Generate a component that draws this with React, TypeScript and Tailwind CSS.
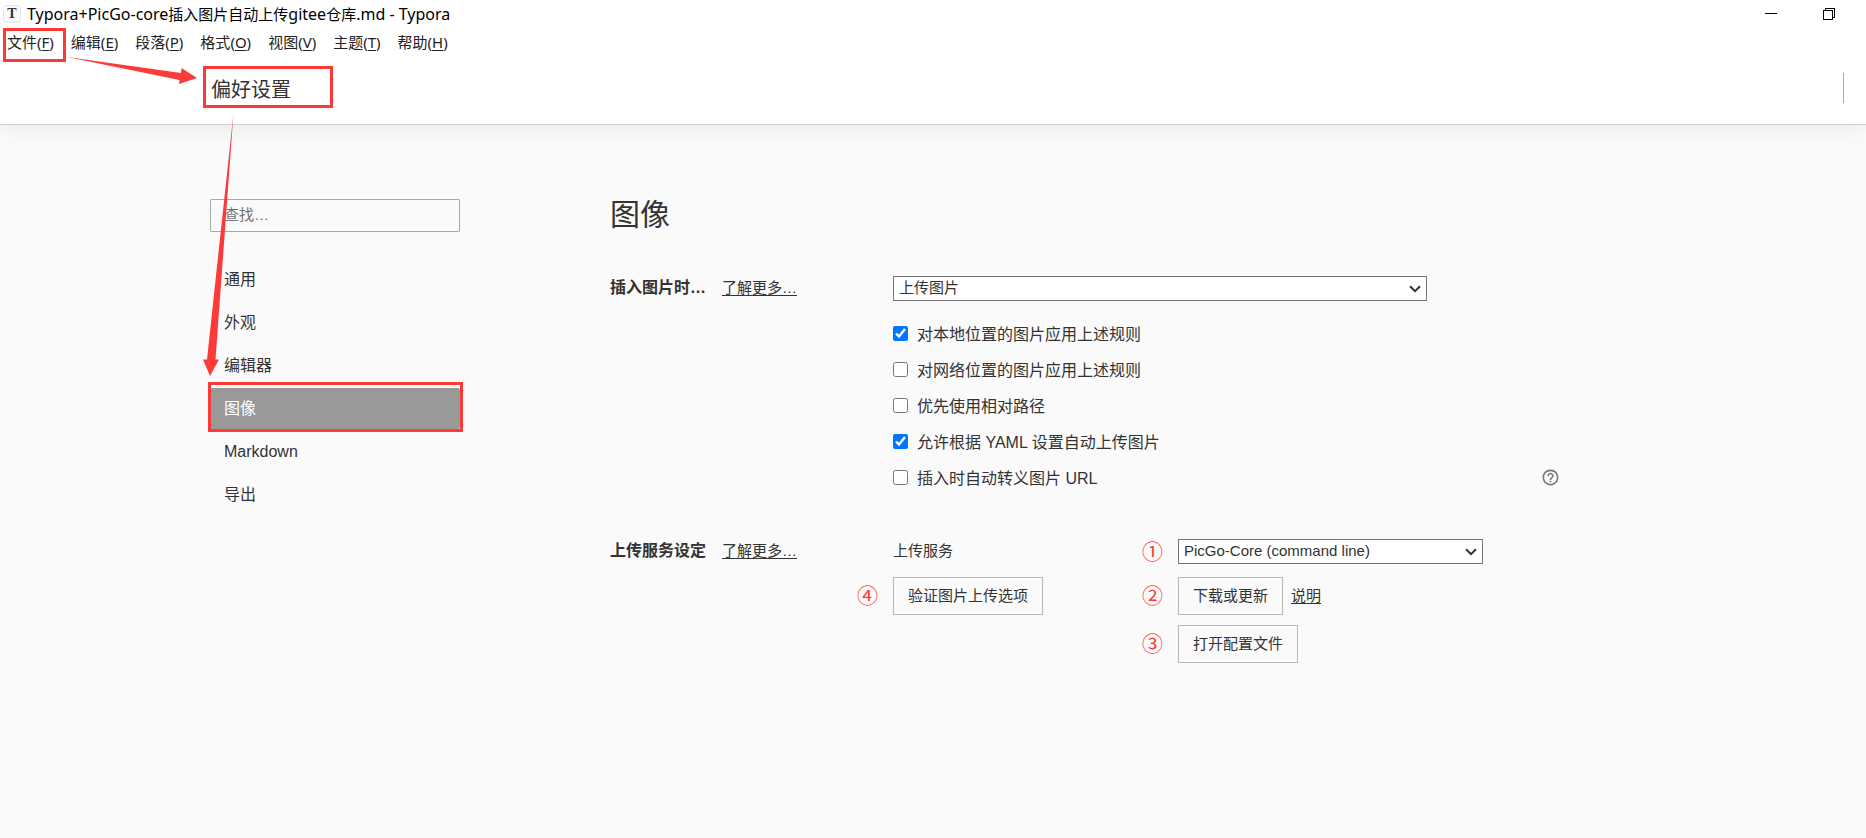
import { useState } from 'react';
import type { ReactNode } from 'react';
import { MdHelpOutline } from 'react-icons/md';

const menuItems = [
  { label: '文件', key: 'F' },
  { label: '编辑', key: 'E' },
  { label: '段落', key: 'P' },
  { label: '格式', key: 'O' },
  { label: '视图', key: 'V' },
  { label: '主题', key: 'T' },
  { label: '帮助', key: 'H' },
];

const navItems = ['通用', '外观', '编辑器', '图像', 'Markdown', '导出'];

const imageRules = [
  { id: 'local', label: '对本地位置的图片应用上述规则', checked: true },
  { id: 'remote', label: '对网络位置的图片应用上述规则', checked: false },
  { id: 'relative', label: '优先使用相对路径', checked: false },
  { id: 'yaml', label: '允许根据 YAML 设置自动上传图片', checked: true },
  { id: 'escape', label: '插入时自动转义图片 URL', checked: false, help: true },
];

function TitleBar() {
  return (
    <div className="flex h-7 items-center pl-[3px] font-['Noto_Sans','Noto_Sans_CJK_SC',sans-serif] text-black">
      <span className="flex h-[18px] w-[18px] items-center justify-center rounded border border-[#e4e4e4] bg-[#fafafa] font-['Liberation_Serif',serif] text-sm leading-none font-bold text-[#333]">
        T
      </span>
      <h1 className="ml-1.5 text-base leading-5 whitespace-nowrap">
        Typora+PicGo-core<span className="text-[15px]">插入图片自动上传</span>gitee<span className="text-[15px]">仓库</span>.md - Typora
      </h1>
      <div className="ml-auto flex items-center gap-[46px] pr-[31px]">
        <button aria-label="最小化">
          <svg width="12" height="12" className="block" shapeRendering="crispEdges">
            <path d="M0 5.5h12" stroke="#000" />
          </svg>
        </button>
        <button aria-label="还原">
          <svg width="12" height="12" className="block" fill="none" stroke="#000" shapeRendering="crispEdges">
            <path d="M.5 2.5h9v9h-9z" />
            <path d="M2.5 2.5v-2h9v9h-2" />
          </svg>
        </button>
      </div>
    </div>
  );
}

function MenuBar() {
  return (
    <nav className="flex h-7 items-center gap-[17px] pl-[7px] font-['Noto_Sans','Noto_Sans_CJK_SC',sans-serif] text-[15px] leading-5 text-[#222]">
      {menuItems.map((item, i) => (
        <button key={item.key} className="relative whitespace-nowrap">
          {item.label}(<span className="underline underline-offset-2">{item.key}</span>)
          {i === 0 && <span className="absolute -top-1 -right-3 -bottom-2.5 -left-1 border-[3px] border-[#fc3a37]" />}
        </button>
      ))}
    </nav>
  );
}

function Sidebar() {
  const [active, setActive] = useState('图像');

  return (
    <aside className="w-[250px] shrink-0">
      <input
        type="search"
        aria-label="查找"
        placeholder="查找…"
        className="block h-[33px] w-full rounded-[1px] border border-[#a9a9a9] px-[13px] pb-0.5 text-[15px] placeholder:text-[#757575]"
      />
      <ul className="mt-[27px]">
        {navItems.map((item) => (
          <li key={item} className="relative h-[43px]">
            <button
              onClick={() => setActive(item)}
              className={`h-[41px] w-full rounded-xs px-3.5 text-left ${active === item ? 'bg-[#999] text-white' : ''}`}
            >
              {item}
            </button>
            {item === '图像' && (
              <span className="pointer-events-none absolute -top-1.5 -right-[3px] -bottom-px -left-0.5 border-[3px] border-[#fc3a37]" />
            )}
          </li>
        ))}
      </ul>
    </aside>
  );
}

function Section({ title, children }: { title: string; children: ReactNode }) {
  return (
    <section className="flex">
      <div className="flex w-[283px] shrink-0 items-baseline self-start">
        <h3 className="w-28 leading-6 font-bold whitespace-nowrap">{title}</h3>
        <a href="#more" className="text-[15px] leading-6 underline underline-offset-2">
          了解更多…
        </a>
      </div>
      <div className="min-w-0 flex-1">{children}</div>
    </section>
  );
}

function Select({ id, label, options }: { id: string; label?: string; options: string[] }) {
  return (
    <div className="relative">
      <select
        id={id}
        aria-label={label}
        className="block h-[25px] w-full appearance-none border border-[#767676] bg-white pr-6 pb-0.5 pl-[5px] text-[15px] leading-5"
      >
        {options.map((option) => (
          <option key={option}>{option}</option>
        ))}
      </select>
      <svg
        className="pointer-events-none absolute top-[9px] right-1.5"
        width="12"
        height="8"
        fill="none"
        stroke="#333"
        strokeWidth="2"
      >
        <path d="M1 1.200 6 6.200 11 1.200" />
      </svg>
    </div>
  );
}

function Mark({ children }: { children: string }) {
  return (
    <span className="absolute top-1/2 right-full mr-[15px] -translate-y-1/2 text-[21px] leading-6 text-[#fc3a37]">
      {children}
    </span>
  );
}

const buttonClass = 'h-[38px] border border-[#b8b8b8] px-3.5 text-[15px] leading-5 whitespace-nowrap';

function ImageSettings() {
  return (
    <main className="min-w-0 flex-1">
      <h2 className="text-3xl leading-8">图像</h2>
      <div className="mt-[45px]">
        <Section title="插入图片时…">
          <div className="max-w-[534px]">
            <Select id="insert" label="插入图片时" options={['上传图片']} />
          </div>
          <ul className="mt-4">
            {imageRules.map((rule) => (
              <li key={rule.id} className="flex h-9 items-center">
                <input type="checkbox" id={rule.id} defaultChecked={rule.checked} className="mb-1 h-[15px] w-[15px]" />
                <label htmlFor={rule.id} className="ml-[9px]">
                  {rule.label}
                </label>
                {rule.help && (
                  <button aria-label="帮助" className="mb-1 ml-auto">
                    <MdHelpOutline size={19} color="#777" />
                  </button>
                )}
              </li>
            ))}
          </ul>
        </Section>
      </div>
      <div className="mt-[42px]">
        <Section title="上传服务设定">
          <div className="grid grid-cols-[285px_1fr] gap-y-2.5 text-[15px]">
            <label htmlFor="service" className="h-7 leading-6">
              上传服务
            </label>
            <div className="relative max-w-[305px] self-start">
              <Mark>①</Mark>
              <Select id="service" options={['PicGo-Core (command line)']} />
            </div>
            <div className="relative">
              <Mark>④</Mark>
              <button className={buttonClass}>验证图片上传选项</button>
            </div>
            <div className="relative">
              <Mark>②</Mark>
              <button className={buttonClass}>下载或更新</button>
              <a href="#help" className="ml-2 underline underline-offset-2">
                说明
              </a>
            </div>
            <div className="relative col-start-2">
              <Mark>③</Mark>
              <button className={buttonClass}>打开配置文件</button>
            </div>
          </div>
        </Section>
      </div>
    </main>
  );
}

function Arrows() {
  return (
    <svg className="pointer-events-none absolute top-0 left-0" width="260" height="400" fill="#fc3a37">
      <path d="M67 57 181 73 181.500 68 197 78 179 84 179.500 80Z" />
      <path d="M233.500 113 215.500 359.500H219L210 376 203 359.500H207Z" />
    </svg>
  );
}

export default function App() {
  return (
    <div className="relative min-h-screen bg-[#fafafa] font-['Liberation_Sans','Noto_Sans_CJK_SC',sans-serif] text-base text-[#333]">
      <header className="border-b border-[#ccc] bg-white shadow-[0_2px_20px_rgba(0,0,0,0.08)]">
        <TitleBar />
        <MenuBar />
        <div className="flex h-[68px] items-start justify-between pt-2.5 pr-[22px] pl-[203px]">
          <div className="flex h-[42px] w-[130px] items-center border-[3px] border-[#fc3a37] pt-1.5 pl-[5px] text-xl whitespace-nowrap">
            偏好设置
          </div>
          <span className="mt-[7px] h-[30px] w-px bg-[#aaa]" />
        </div>
      </header>
      <div className="mx-auto flex max-w-[1446px] gap-[150px] pt-[74px] pr-24">
        <Sidebar />
        <ImageSettings />
      </div>
      <Arrows />
    </div>
  );
}
